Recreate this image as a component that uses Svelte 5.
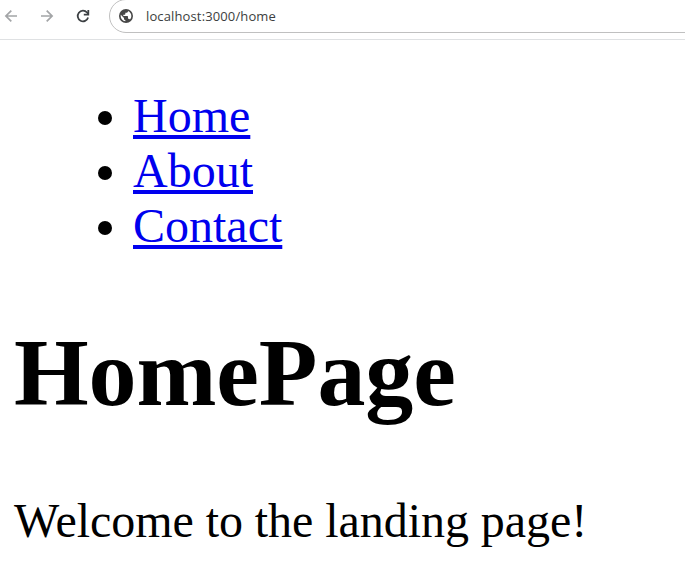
<script>
  const links = ['Home', 'About', 'Contact'];
</script>

<div class="window">
  <header class="toolbar">
    <svg class="nav" width="16" height="16" viewBox="0 0 16 16" fill="none" stroke="#a3a5a7" stroke-width="1.7"><path d="M14 8H3M8.300 2.600L2.900 8l5.400 5.400" /></svg>
    <svg class="nav forward" width="16" height="16" viewBox="0 0 16 16" fill="none" stroke="#a3a5a7" stroke-width="1.7"><path d="M2 8h11M7.700 2.600L13.100 8l-5.400 5.400" /></svg>
    <svg class="nav reload" width="16" height="16" viewBox="0 0 16 16" fill="none" stroke="#3c4043" stroke-width="1.8"><path d="M13.100 9.500A5.300 5.300 0 1 1 12 4.500L13.300 6" /><path d="M13.300 2v4.700H8.800" /></svg>
    <div class="address">
      <svg width="16" height="16" viewBox="0 0 24 24" fill="#474747"><path d="M12 1.500a10.500 10.500 0 1 0 0 21 10.500 10.500 0 0 0 0-21zm-1 18.430c-3.950-.49-7-3.850-7-7.930 0-.62.08-1.210.21-1.790L9 15v1c0 1.100.9 2 2 2v1.930zm6.900-2.540c-.26-.81-1-1.390-1.900-1.390h-1v-3c0-.55-.45-1-1-1H8v-2h2c.55 0 1-.45 1-1V7h2c1.100 0 2-.9 2-2v-.41c2.930 1.190 5 4.060 5 7.410 0 2.080-.8 3.970-2.100 5.390z" /></svg>
      <span>localhost:3000/home</span>
    </div>
  </header>
  <main>
    <ul>
      {#each links as link}
        <li><a href="#{link}">{link}</a></li>
      {/each}
    </ul>
    <h1>HomePage</h1>
    <p>Welcome to the landing page!</p>
  </main>
</div>

<style>
  .window { width: 685px; height: 580px; overflow: hidden; background: #fff; color: #000; }
  .toolbar { box-sizing: border-box; height: 40px; display: flex; align-items: flex-start; border-bottom: 1px solid #dfe1e3; padding-left: 3px; }
  .nav { flex: none; margin-top: 8px; }
  .forward { margin-left: 20px; }
  .reload { margin-left: 20px; }
  .address { box-sizing: border-box; flex: none; width: 620px; height: 34px; margin: -1px 0 0 18px; display: flex; align-items: center; gap: 12px; border: 1px solid #c0c0c0; border-radius: 17px; padding-left: 8px; font: 13px "Open Sans", sans-serif; letter-spacing: 0.13px; color: #3c3e40; }
  main { font: 48px/55px "Liberation Serif", "Times New Roman", serif; padding: 48px 14px 0; }
  ul { margin: 0; padding-left: 119px; }
  a { color: #0000ee; text-decoration: underline; text-decoration-thickness: 4px; text-underline-offset: 3px; }
  h1 { font-size: 96px; line-height: 110px; margin: 65px 0; font-weight: bold; letter-spacing: -0.1px; }
  p { margin: 0; letter-spacing: -0.05px; }
</style>
